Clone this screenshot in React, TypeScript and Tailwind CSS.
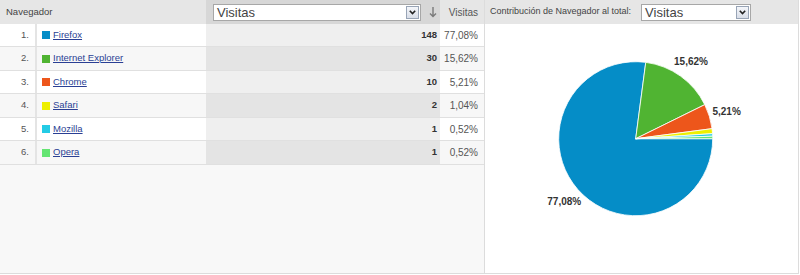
import React from "react";

const rows = [
  { n: 1, name: "Firefox", color: "#058dc7", v: 148, p: "77,08%", h: "h-[23px]" },
  { n: 2, name: "Internet Explorer", color: "#50b432", v: 30, p: "15,62%", h: "h-[24px]" },
  { n: 3, name: "Chrome", color: "#ed561b", v: 10, p: "5,21%", h: "h-[23px]" },
  { n: 4, name: "Safari", color: "#edef00", v: 2, p: "1,04%", h: "h-[24px]" },
  { n: 5, name: "Mozilla", color: "#24cbe5", v: 1, p: "0,52%", h: "h-[23px]" },
  { n: 6, name: "Opera", color: "#64e572", v: 1, p: "0,52%", h: "h-[24px]" },
];

const total = rows.reduce((s, r) => s + r.v, 0);

function SelectBox({ width }: { width: string }) {
  return (
    <div className={`${width} flex h-[17px] items-center border border-[#a7a7a7] bg-white pl-[3px]`}>
      <span className="flex-1 text-[13px] leading-none text-[#444]">Visitas</span>
      <div className="mr-px flex h-[13px] w-[13px] items-center justify-center border border-[#98a4b6] bg-gradient-to-b from-[#f4f6fa] to-[#d9dee8]">
        <svg width="7" height="5" viewBox="0 0 7 5">
          <path d="M0.8 0.8 L3.5 3.6 L6.2 0.8" fill="none" stroke="#222" strokeWidth="1.6" />
        </svg>
      </div>
    </div>
  );
}

function Pie() {
  const cx = 150.7;
  const cy = 114.7;
  const r = 77;
  let acc = 0;
  const slices = rows.map((row) => {
    const a0 = (acc / total) * Math.PI * 2;
    acc += row.v;
    const a1 = (acc / total) * Math.PI * 2;
    const x0 = cx + r * Math.cos(a0);
    const y0 = cy + r * Math.sin(a0);
    const x1 = cx + r * Math.cos(a1);
    const y1 = cy + r * Math.sin(a1);
    const large = a1 - a0 > Math.PI ? 1 : 0;
    const d = `M${cx} ${cy} L${x0} ${y0} A${r} ${r} 0 ${large} 1 ${x1} ${y1} Z`;
    const mid = (a0 + a1) / 2;
    return {
      d,
      color: row.color,
      label: row.v / total > 0.05 ? row.p : null,
      lx: cx + 95 * Math.cos(mid),
      ly: cy + 95 * Math.sin(mid),
    };
  });
  return (
    <svg width="313" height="249" viewBox="0 0 313 249">
      {slices.map((s, i) => (
        <path key={i} d={s.d} fill={s.color} stroke="#fff" strokeWidth="0.8" strokeLinejoin="round" />
      ))}
      {slices.map((s, i) =>
        s.label ? (
          <text
            key={i}
            x={s.lx}
            y={s.ly}
            textAnchor="middle"
            dominantBaseline="central"
            fontFamily="'Liberation Sans', Arial, sans-serif"
            fontWeight="bold"
            fontSize="10"
            fill="#333"
          >
            {s.label}
          </text>
        ) : null
      )}
    </svg>
  );
}

export default function App() {
  return (
    <div className="flex h-[274px] w-[799px] border-r border-b border-[#dcdcdc] bg-white font-['Liberation_Sans',Arial,sans-serif]">
      {/* Table */}
      <div className="flex w-[485px] flex-col border-r border-[#dcdcdc] bg-[#f8f8f8]">
        <div className="flex h-[24px] bg-[#e6e6e6]">
          <div className="flex w-[206px] items-center pl-[6px] text-[9.5px] text-[#444]">Navegador</div>
          <div className="flex w-[234px] items-center bg-[#d7d7d7] pl-[7px]">
            <SelectBox width="w-[208px]" />
            <svg className="ml-[8px]" width="8" height="12" viewBox="0 0 8 12">
              <path d="M4 1 V10.5 M1 7.5 L4 10.5 L7 7.5" fill="none" stroke="#7a7a7a" strokeWidth="1.4" />
            </svg>
          </div>
          <div className="flex w-[44px] items-center justify-end pr-[6px] text-[10px] text-[#555]">Visitas</div>
        </div>

        {rows.map((row, i) => (
          <div key={row.n} className={`flex ${row.h} border-b border-[#e0e0e0] ${i % 2 === 1 ? "bg-[#f7f7f7]" : "bg-white"}`}>
            <div className="flex w-[37px] items-center justify-end border-r-2 border-[#e4e4e4] pr-[6px] text-[9.5px] text-[#555]">
              {row.n}.
            </div>
            <div className="flex w-[169px] items-center pl-[5px]">
              <span className="mr-[3px] h-[8px] w-[8px]" style={{ backgroundColor: row.color }} />
              <a href="#" className="text-[9.5px] text-[#2a3f94] underline">
                {row.name}
              </a>
            </div>
            <div className={`flex w-[234px] items-center justify-end pr-[3px] text-[9.5px] font-bold text-[#333] ${i % 2 === 1 ? "bg-[#e4e4e4]" : "bg-[#efefef]"}`}>
              {row.v}
            </div>
            <div className="flex w-[44px] items-center justify-end pr-[6px] text-[10px] text-[#555]">{row.p}</div>
          </div>
        ))}
        <div className="flex-1" />
      </div>

      {/* Chart */}
      <div className="flex flex-1 flex-col">
        <div className="flex h-[24px] items-center gap-[10px] bg-[#e6e6e6] pl-[5px]">
          <span className="text-[9px] text-[#444]">Contribución de Navegador al total:</span>
          <SelectBox width="w-[110px]" />
        </div>
        <div className="flex-1">
          <Pie />
        </div>
      </div>
    </div>
  );
}
